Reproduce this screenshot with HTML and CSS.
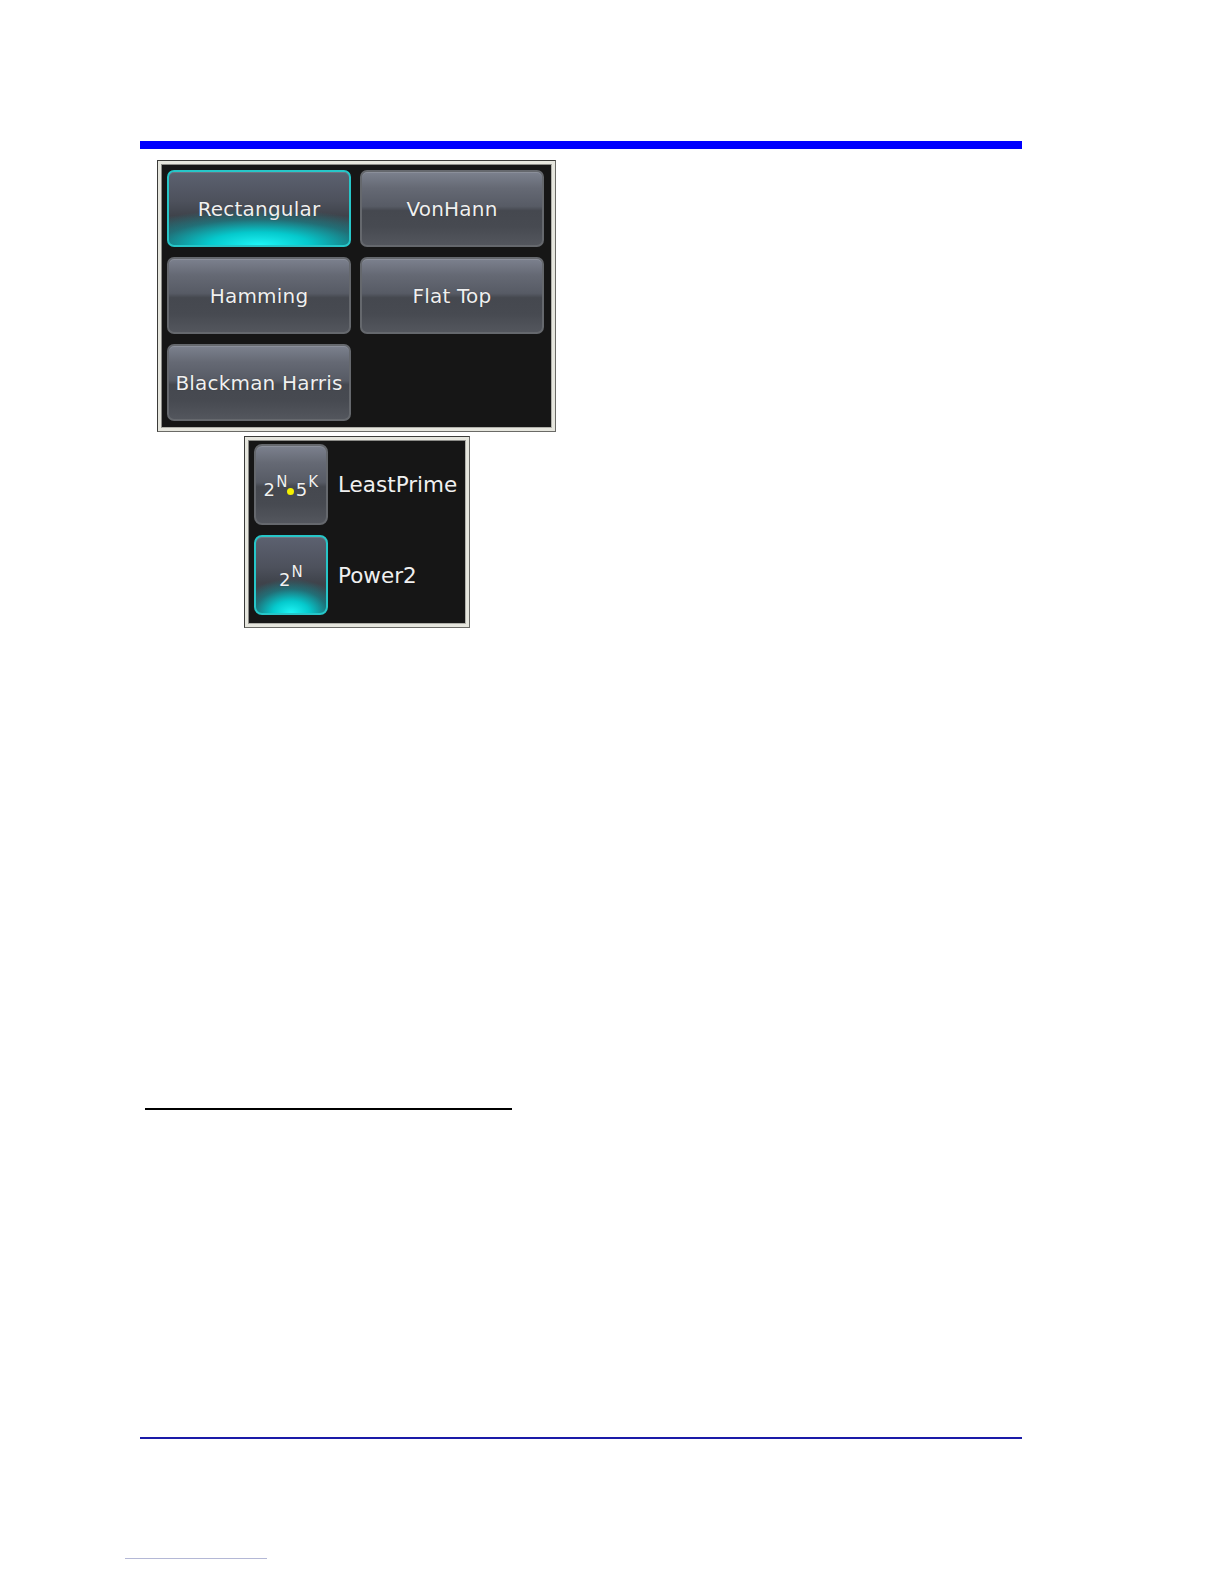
FILE: index.html
```html
<!DOCTYPE html>
<html>
<head>
<meta charset="utf-8">
<link rel="stylesheet" href="styles.css">
</head>
<body>
<div class="page">
  <div class="title-bar"></div>

  <div class="frame frame-window">
    <div class="panel grid-panel">
      <div class="btn selected"><span>Rectangular</span></div>
      <div class="btn"><span>VonHann</span></div>
      <div class="btn"><span>Hamming</span></div>
      <div class="btn"><span>Flat Top</span></div>
      <div class="btn"><span>Blackman Harris</span></div>
    </div>
  </div>

  <div class="frame frame-fft">
    <div class="panel list-panel">
      <div class="opt">
        <div class="btn icon-btn">
          <span class="math">2<sup>N</sup><i class="dot"></i>5<sup>K</sup></span>
        </div>
        <span class="opt-label">LeastPrime</span>
      </div>
      <div class="opt">
        <div class="btn icon-btn selected">
          <span class="math">2<sup>N</sup></span>
        </div>
        <span class="opt-label">Power2</span>
      </div>
    </div>
  </div>

  <div class="footnote-rule"></div>
  <div class="footer-rule"></div>
  <div class="page-rule"></div>
</div>
</body>
</html>
```

FILE: styles.css
```css
html, body {
  margin: 0;
  padding: 0;
  background: #ffffff;
}

.page {
  width: 1224px;
  height: 1584px;
  padding-left: 140px;
  box-sizing: border-box;
  display: flex;
  flex-direction: column;
  align-items: flex-start;
}

.title-bar {
  margin-top: 141px;
  width: 882px;
  height: 8px;
  background: #0000ff;
}

.frame {
  box-sizing: border-box;
  border: 1px solid #3c3c3a;
  border-right-color: #6a6a66;
  border-bottom-color: #6a6a66;
  background: #e6e6de;
  padding: 3px;
}

.frame .panel {
  border: 1px solid #8c8c88;
  border-right-color: #b0b0aa;
  border-bottom-color: #b0b0aa;
  background: #161616;
}

.frame-window {
  margin-top: 11px;
  margin-left: 17px;
  width: 399px;
  height: 272px;
}

.grid-panel {
  box-sizing: border-box;
  height: 100%;
  padding: 5px 5px 4px 5px;
  display: grid;
  grid-template-columns: 184px 184px;
  grid-template-rows: 77px 77px 77px;
  column-gap: 9px;
  row-gap: 10px;
}

.btn {
  box-sizing: border-box;
  border: 2px solid #65686d;
  border-radius: 7px;
  background: linear-gradient(to bottom, #7c818e 0%, #656974 22%, #575b65 47%, #45484f 53%, #474a51 75%, #53565d 100%);
  box-shadow: inset 0 1px 0 rgba(255,255,255,0.12);
  display: flex;
  align-items: center;
  justify-content: center;
  color: #f0f0f0;
  font-family: "DejaVu Sans", Verdana, sans-serif;
  font-size: 20px;
  letter-spacing: 0.2px;
}

.btn span {
  text-shadow: 0 0 1px rgba(0,0,0,0.4);
}

.btn.selected {
  border-color: #26c6c8;
  background:
    radial-gradient(ellipse 80% 50% at 50% 100%, rgba(30,245,245,1) 0%, rgba(0,215,218,0.9) 35%, rgba(0,170,178,0.4) 70%, rgba(0,140,150,0) 100%),
    linear-gradient(to bottom, #5c6170 0%, #4d515c 40%, #3f434b 60%, #2e4d55 100%);
}

.frame-fft {
  margin-top: 4px;
  margin-left: 104px;
  width: 226px;
  height: 192px;
}

.list-panel {
  box-sizing: border-box;
  height: 100%;
  padding: 3px 5px 6px 5px;
  display: flex;
  flex-direction: column;
  gap: 10px;
}

.opt {
  display: flex;
  align-items: center;
  gap: 10px;
}

.icon-btn {
  width: 74px;
  height: 81px;
  flex: none;
  border-radius: 8px;
}

.icon-btn.selected {
  background:
    radial-gradient(ellipse 75% 45% at 50% 100%, rgba(30,245,245,1) 0%, rgba(0,215,218,0.9) 35%, rgba(0,170,178,0.4) 70%, rgba(0,140,150,0) 100%),
    linear-gradient(to bottom, #5c6170 0%, #4d515c 40%, #3f434b 60%, #2e4d55 100%);
}

.opt + .opt .icon-btn {
  height: 80px;
}

.opt-label {
  color: #f0f0f0;
  font-family: "DejaVu Sans", Verdana, sans-serif;
  font-size: 21.5px;
  white-space: nowrap;
}

.math {
  display: inline-block;
  font-size: 18px;
  line-height: 20px;
  margin-top: 10px;
  white-space: nowrap;
}

.math sup {
  font-size: 15px;
  position: relative;
  top: -9px;
  vertical-align: baseline;
  line-height: 0;
  margin-left: 1px;
}

.dot {
  display: inline-block;
  width: 7px;
  height: 7px;
  border-radius: 50%;
  background: #f4f000;
  margin: 0 2px 0 -1px;
  vertical-align: baseline;
  position: relative;
  top: -1px;
}

.footnote-rule {
  margin-top: 480px;
  margin-left: 5px;
  width: 367px;
  height: 2px;
  background: #000000;
}

.footer-rule {
  margin-top: 327px;
  width: 882px;
  height: 2px;
  background: #1a1aa8;
}

.page-rule {
  margin-top: 119px;
  margin-left: -15px;
  width: 142px;
  height: 1px;
  background: #b4b8d6;
}
```
